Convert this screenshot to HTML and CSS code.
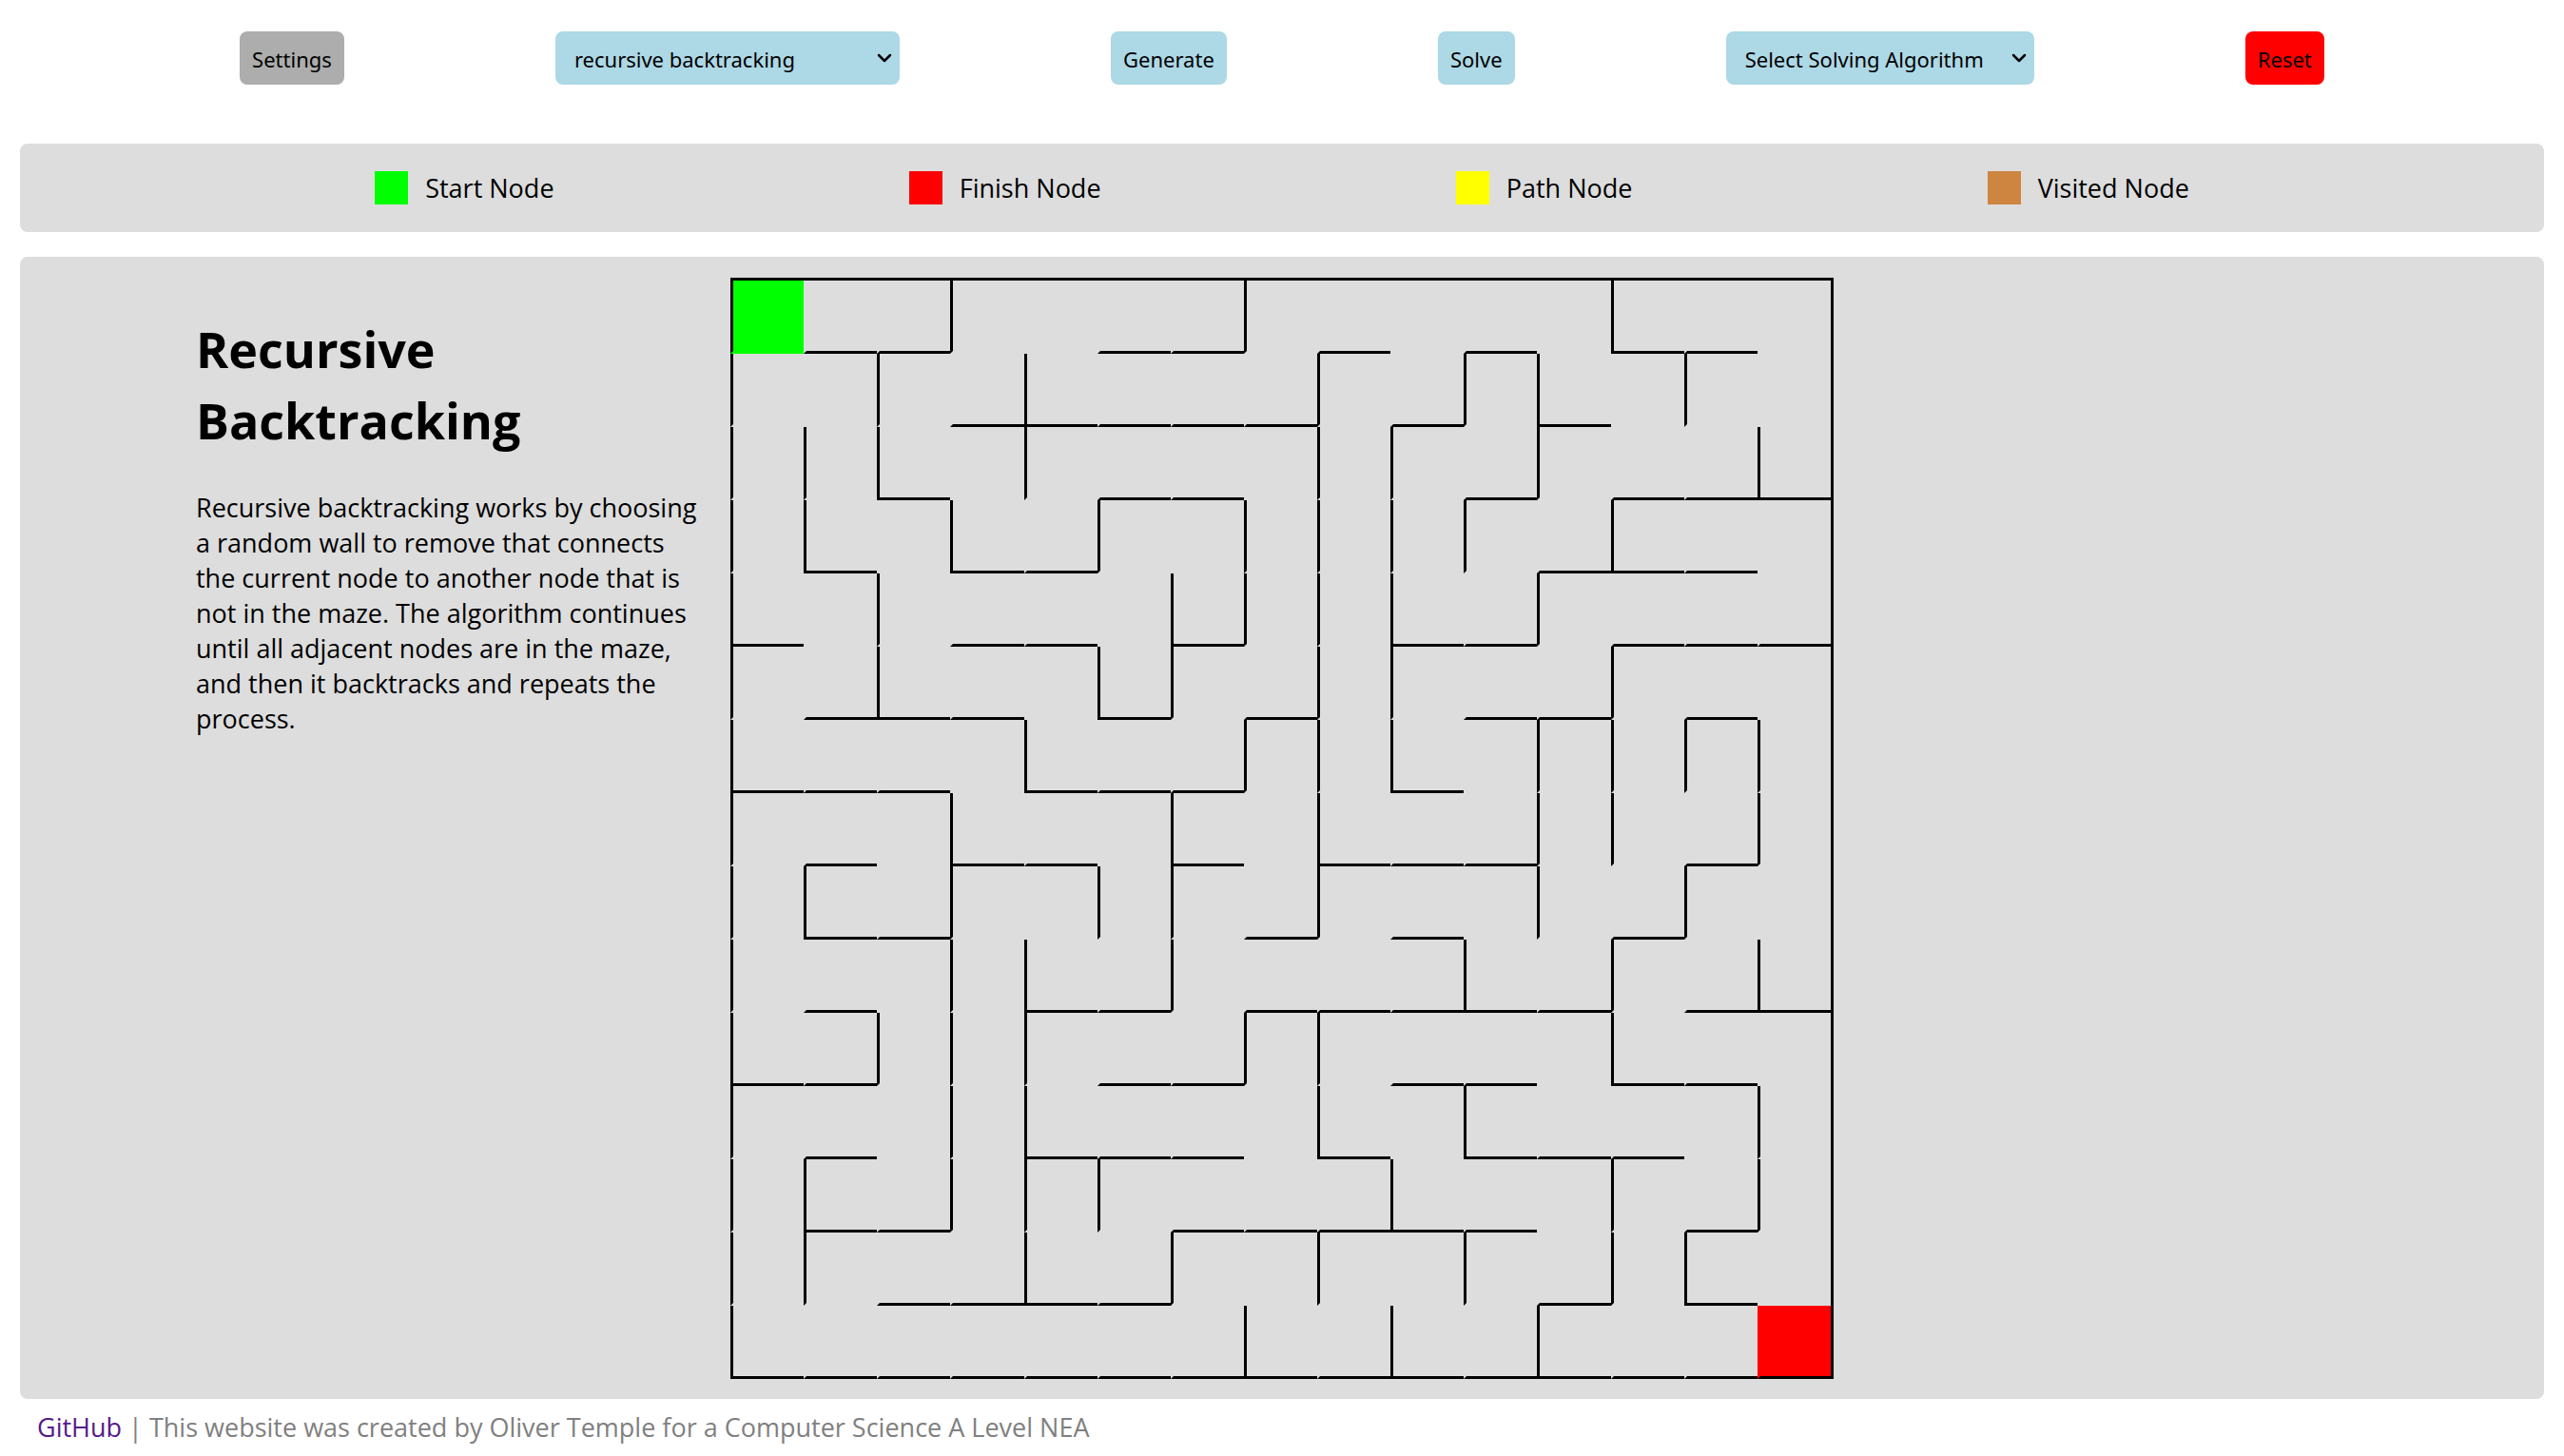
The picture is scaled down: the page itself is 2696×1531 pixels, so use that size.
FILE: index.html
```html
<!DOCTYPE html>
<html lang="en">
<head>
<meta charset="utf-8">
<meta name="viewport" content="width=device-width, initial-scale=1">
<title>Maze Generator and Solver</title>
<link rel="stylesheet" href="styles.css">
</head>
<body>
<header class="toolbar">
  <button class="control control-settings" type="button">Settings</button>
  <div class="picker picker-generate">
    <select class="control control-select" aria-label="Generation algorithm">
      <option>recursive backtracking</option>
    </select>
    <svg class="chevron" viewBox="0 0 16 10" aria-hidden="true"><path d="M2 2l6 6 6-6"/></svg>
  </div>
  <button class="control" type="button">Generate</button>
  <button class="control" type="button">Solve</button>
  <div class="picker picker-solve">
    <select class="control control-select" aria-label="Solving algorithm">
      <option>Select Solving Algorithm</option>
    </select>
    <svg class="chevron" viewBox="0 0 16 10" aria-hidden="true"><path d="M2 2l6 6 6-6"/></svg>
  </div>
  <button class="control control-reset" type="button">Reset</button>
</header>
<ul class="panel legend">
  <li class="legend-item"><span class="swatch swatch-start"></span>Start Node</li>
  <li class="legend-item"><span class="swatch swatch-finish"></span>Finish Node</li>
  <li class="legend-item"><span class="swatch swatch-path"></span>Path Node</li>
  <li class="legend-item"><span class="swatch swatch-visited"></span>Visited Node</li>
</ul>
<main class="panel stage">
  <section class="about">
    <h1 class="about-title">Recursive Backtracking</h1>
    <p class="about-text">Recursive backtracking works by choosing a random wall to remove that connects the current node to another node that is not in the maze. The algorithm continues until all adjacent nodes are in the maze, and then it backtracks and repeats the process.</p>
  </section>
  <div class="maze" id="maze" role="img" aria-label="Maze"></div>
</main>
<footer class="footer"><a class="footer-link" href="#">GitHub</a> | This website was created by Oliver Temple for a Computer Science A Level NEA</footer>
<script src="script.js"></script>
</body>
</html>
```
FILE: styles.css
```css
*, *::before, *::after {
  box-sizing: border-box;
}

body {
  margin: 0;
  background: #fff;
  color: #000;
  font-family: "Segoe UI", "Open Sans", sans-serif;
  font-size: 27px;
  line-height: 37px;
}

.toolbar {
  display: flex;
  flex-wrap: wrap;
  justify-content: space-evenly;
  align-items: center;
  row-gap: 16px;
  padding: 33px 30px 62px;
}

.control {
  height: 56px;
  margin: 0;
  padding: 1px 13px 0;
  border: 0;
  border-radius: 8px;
  background: lightblue;
  color: #000;
  font-family: Tahoma, "Noto Sans", sans-serif;
  font-size: 22px;
  line-height: 32px;
}

.control-settings {
  background: #adadad;
}

.control-reset {
  background: red;
}

.picker {
  display: grid;
  align-items: center;
}

.picker-generate {
  width: 362px;
}

.picker-solve {
  width: 324px;
}

.control-select {
  grid-area: 1 / 1;
  width: 100%;
  padding: 1px 20px 0;
  appearance: none;
}

.chevron {
  grid-area: 1 / 1;
  justify-self: end;
  width: 16px;
  height: 10px;
  margin-right: 8px;
  fill: none;
  stroke: #000;
  stroke-width: 2.5;
  stroke-linecap: round;
  stroke-linejoin: round;
  pointer-events: none;
}

.panel {
  margin: 0 21px 26px;
  border-radius: 8px;
  background: #ddd;
}

.legend {
  display: flex;
  flex-wrap: wrap;
  justify-content: space-evenly;
  padding: 28px 0;
  list-style: none;
}

.legend-item {
  display: flex;
  align-items: center;
  gap: 18px;
}

.swatch {
  width: 35px;
  height: 35px;
}

.swatch-start {
  background: lime;
}

.swatch-finish {
  background: red;
}

.swatch-path {
  background: yellow;
}

.swatch-visited {
  background: peru;
}

.stage {
  display: grid;
  grid-template-columns: 1fr minmax(0, 1160px) 1fr;
  align-items: start;
  margin-bottom: 0;
  padding: 22px 0 21px;
}

.about {
  justify-self: end;
  width: 100%;
  max-width: 562px;
  padding: 37px 24px 0 0;
}

.about-title {
  margin: 0 0 36px;
  font-size: 52px;
  line-height: 75px;
}

.about-text {
  margin: 0;
}

.maze {
  display: grid;
  grid-template-columns: repeat(15, 1fr);
  grid-template-rows: repeat(15, 1fr);
  aspect-ratio: 1160 / 1158;
  border-top: 3px solid #000;
  border-right: 3px solid #000;
}

.cell {
  border-bottom: 3px solid transparent;
  border-left: 3px solid transparent;
}

.cell-left {
  border-left-color: #000;
}

.cell-bottom {
  border-bottom-color: #000;
}

.cell-start {
  background: lime;
}

.cell-finish {
  background: red;
}

.footer {
  padding: 11px 39px 10px;
  color: gray;
}

.footer-link {
  color: #551a8b;
  text-decoration: none;
}
```
FILE: script.js
```js
// One digit per cell: 1 = left wall, 2 = bottom wall, 3 = both, 0 = open.
const rows = [
  "122102212020320",
  "101232221213010",
  "113012201121223",
  "130321011112320",
  "301220311321222",
  "123203121122120",
  "322032211301111",
  "120320303221121",
  "132101121201210",
  "120132122232123",
  "321112211220320",
  "120132203032201",
  "132111222320121",
  "112232101012130",
  "322222232323222"
];

const maze = document.getElementById("maze");
const walls = rows.join("");

[...walls].forEach((digit, index) => {
  const cell = document.createElement("div");
  cell.className = "cell";
  if (digit & 1) cell.classList.add("cell-left");
  if (digit & 2) cell.classList.add("cell-bottom");
  if (index === 0) cell.classList.add("cell-start");
  if (index === walls.length - 1) cell.classList.add("cell-finish");
  maze.append(cell);
});
```
